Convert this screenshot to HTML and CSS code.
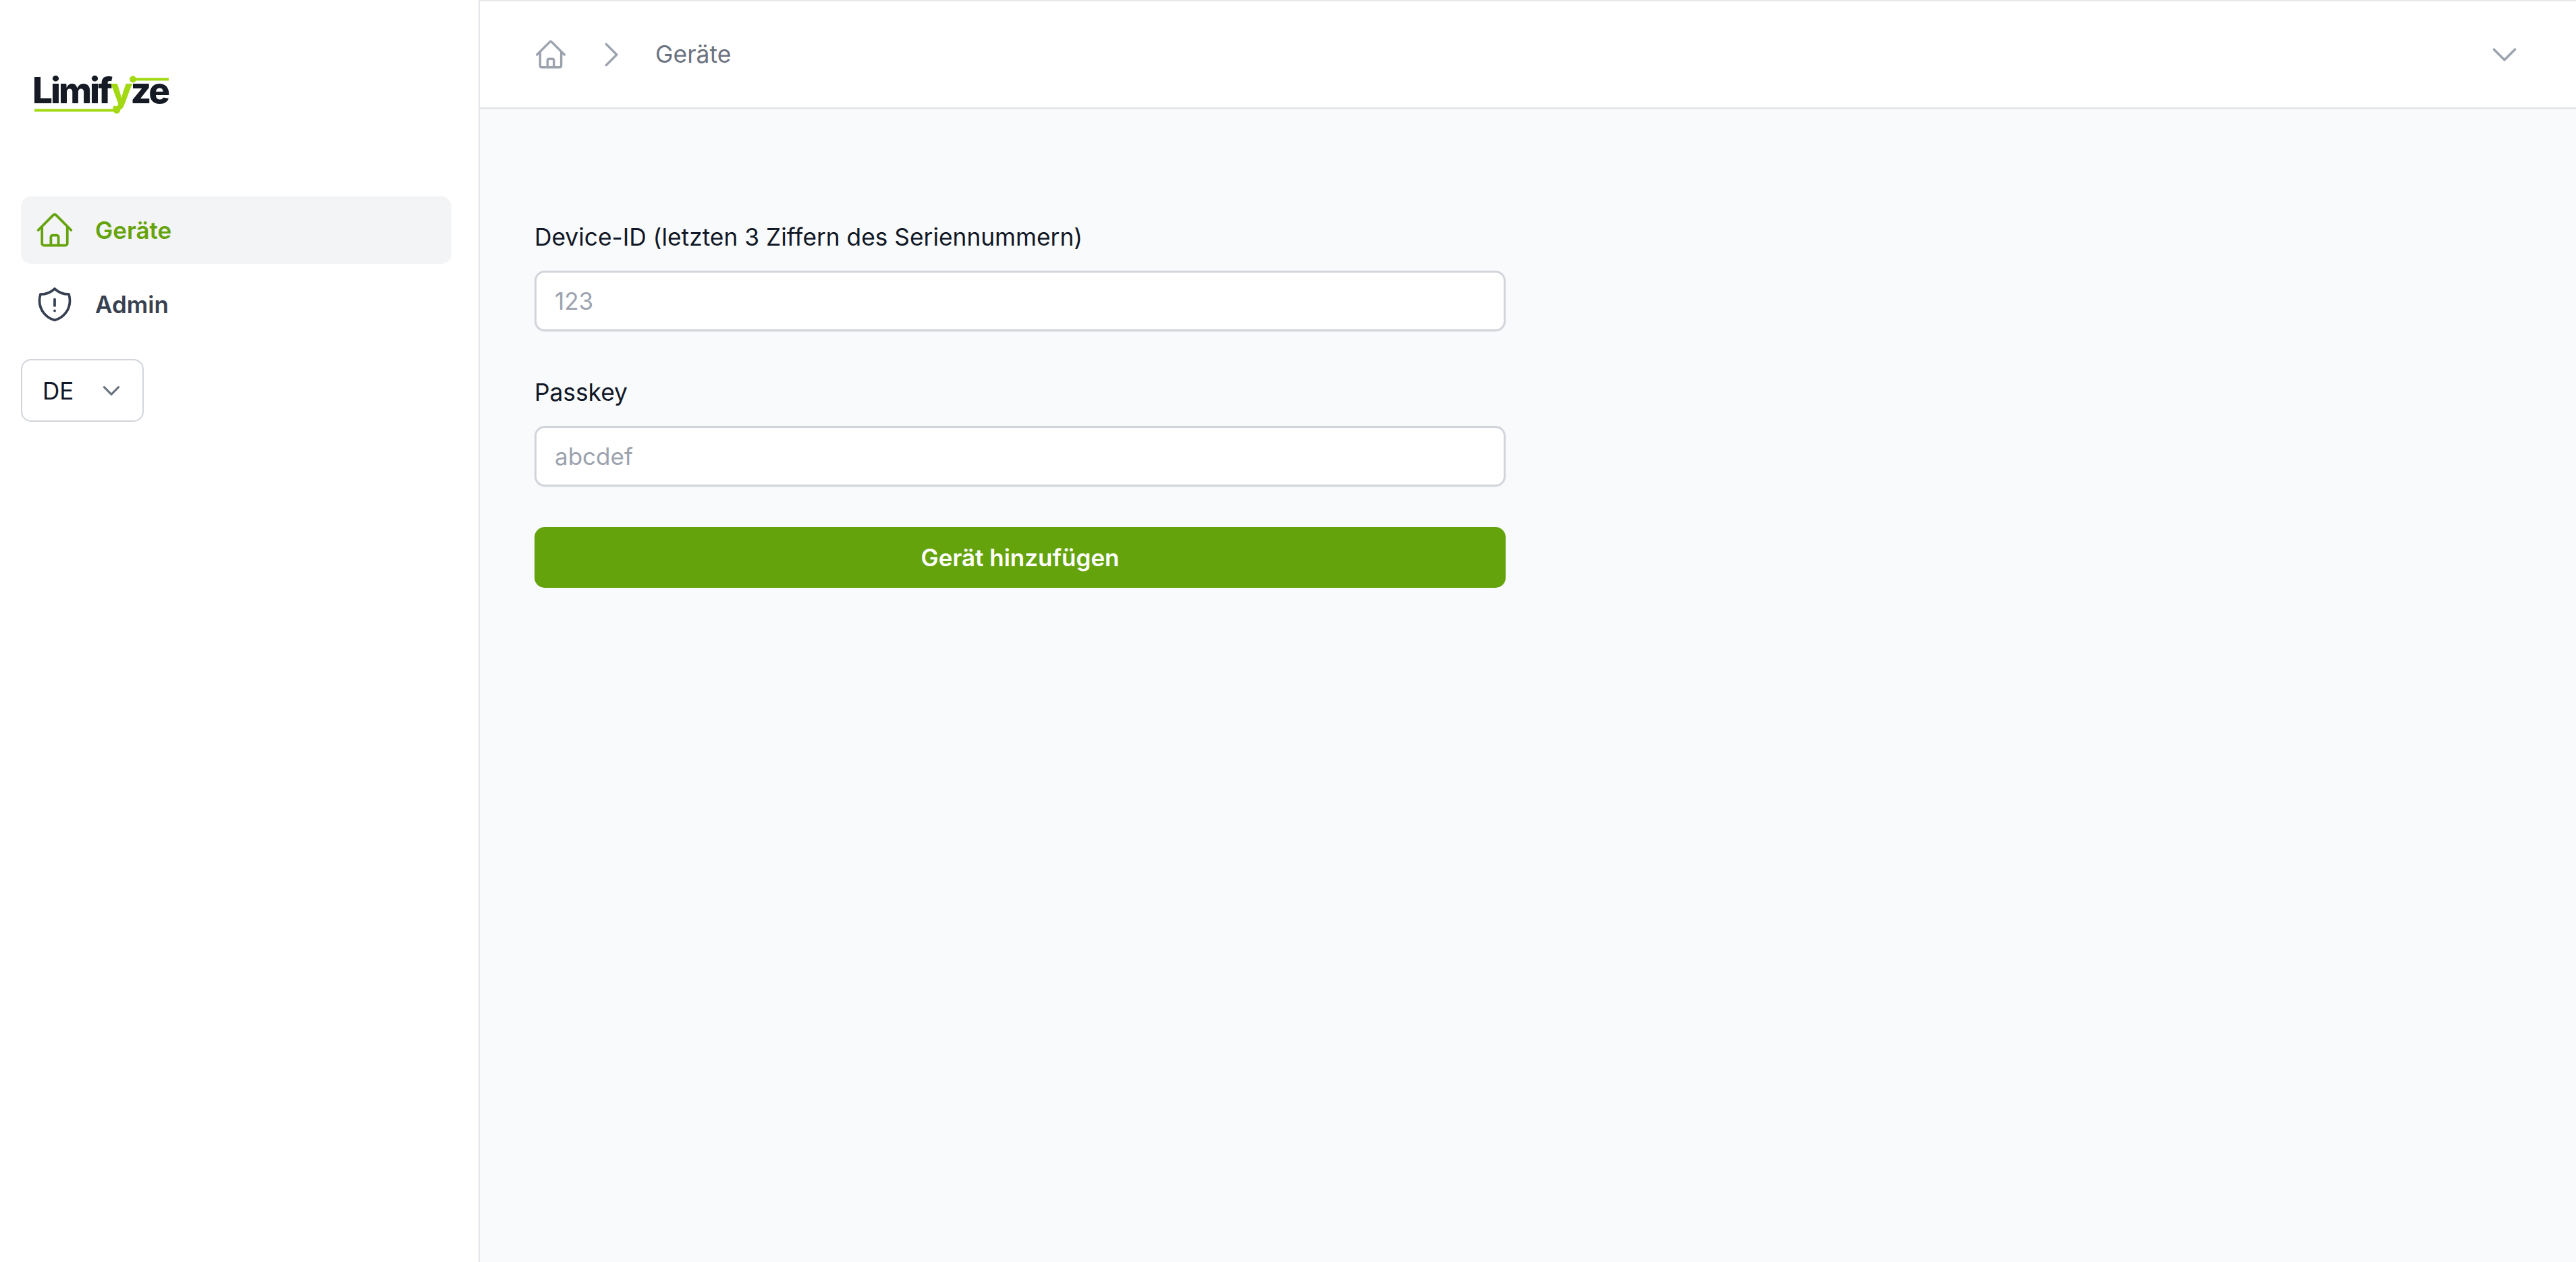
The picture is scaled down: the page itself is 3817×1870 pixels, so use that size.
FILE: index.html
```html
<!DOCTYPE html>
<html lang="de">
<head>
<meta charset="utf-8">
<title>Limifyze</title>
<link rel="stylesheet" href="styles.css">
</head>
<body>
<div class="app">
  <aside class="sidebar">
    <div class="logo">
      <span class="logo-text">Limif<span class="logo-y">y</span>ze</span>
      <svg class="logo-lines" width="210" height="66" viewBox="0 0 210 66" aria-hidden="true">
        <path d="M0 55.500H122" class="logo-line"/>
        <circle cx="122" cy="55.500" r="5" class="logo-dot"/>
        <path d="M146 9.500H199" class="logo-line"/>
        <circle cx="146" cy="9.500" r="5" class="logo-dot"/>
      </svg>
    </div>
    <nav class="nav">
      <a class="nav-item nav-item-active">
        <svg class="nav-icon" viewBox="0 0 24 24"><path d="m2.250 12 8.954-8.955c.44-.439 1.152-.439 1.591 0L21.750 12M4.500 9.750v10.125c0 .621.504 1.125 1.125 1.125H9.750v-4.875c0-.621.504-1.125 1.125-1.125h2.250c.621 0 1.125.504 1.125 1.125V21h4.125c.621 0 1.125-.504 1.125-1.125V9.750M8.250 21h8.250"/></svg>
        <span>Geräte</span>
      </a>
      <a class="nav-item">
        <svg class="nav-icon" viewBox="0 0 24 24"><path d="M12 9v3.750m0-10.036A11.959 11.959 0 0 1 3.598 6 11.990 11.990 0 0 0 3 9.750c0 5.592 3.824 10.290 9 11.622 5.176-1.332 9-6.030 9-11.622 0-1.310-.21-2.571-.598-3.751h-.152c-3.196 0-6.100-1.250-8.250-3.286Zm0 13.036h.008v.008H12v-.008Z"/></svg>
        <span>Admin</span>
      </a>
    </nav>
    <div class="lang">
      <span>DE</span>
      <svg class="lang-chevron" viewBox="0 0 24 24"><path d="m19.500 8.250-7.500 7.500-7.500-7.500"/></svg>
    </div>
  </aside>
  <div class="content">
    <header class="topbar">
      <div class="crumbs">
        <svg class="crumb-icon" viewBox="0 0 24 24"><path d="m2.250 12 8.954-8.955c.44-.439 1.152-.439 1.591 0L21.750 12M4.500 9.750v10.125c0 .621.504 1.125 1.125 1.125H9.750v-4.875c0-.621.504-1.125 1.125-1.125h2.250c.621 0 1.125.504 1.125 1.125V21h4.125c.621 0 1.125-.504 1.125-1.125V9.750M8.250 21h8.250"/></svg>
        <svg class="crumb-icon" viewBox="0 0 24 24"><path d="m8.250 4.500 7.500 7.500-7.500 7.500"/></svg>
        <span class="crumb-text">Geräte</span>
      </div>
      <svg class="crumb-icon" viewBox="0 0 24 24"><path d="m19.500 8.250-7.500 7.500-7.500-7.500"/></svg>
    </header>
    <main class="main">
      <form class="form">
        <div class="field">
          <label class="label" for="device">Device-ID (letzten 3 Ziffern des Seriennummern)</label>
          <input class="input" id="device" type="text" placeholder="123">
        </div>
        <div class="field">
          <label class="label" for="passkey">Passkey</label>
          <input class="input" id="passkey" type="text" placeholder="abcdef">
        </div>
        <button class="submit" type="button">Gerät hinzufügen</button>
      </form>
    </main>
  </div>
</div>
</body>
</html>
```

FILE: styles.css
```css
* { box-sizing: border-box; }
html, body { margin: 0; padding: 0; height: 100%; }
body { font-family: Inter, "Liberation Sans", sans-serif; background: #fff; color: #111827; }
.app { display: flex; height: 1870px; }
.sidebar { width: 711px; flex: none; background: #fff; border-right: 2px solid #e5e7eb; padding: 0 40px 0 31px; display: flex; flex-direction: column; }
.logo { position: relative; margin: 108px 0 0 20px; height: 66px; }
.logo-text { display: block; margin: -5px 0 0 -3px; font-family: Inter, sans-serif; font-weight: 800; font-size: 53px; line-height: 62px; letter-spacing: -3px; color: #151a25; }
.logo-y { color: #a3d912; }
.logo-lines { position: absolute; left: 0; top: 0; }
.logo-line { stroke: #a3d912; stroke-width: 4; fill: none; }
.logo-dot { fill: #a3d912; }
.nav { display: flex; flex-direction: column; gap: 10px; margin-top: 117px; }
.nav-item { display: flex; align-items: center; gap: 30px; height: 100px; padding-left: 20px; border-radius: 15px; font-size: 35px; font-weight: 600; color: #374151; }
.nav-item-active { background: #f3f4f6; color: #65a30d; }
.nav-icon { width: 60px; height: 60px; flex: none; fill: none; stroke: currentColor; stroke-width: 1.500; stroke-linecap: round; stroke-linejoin: round; }
.lang { display: flex; align-items: center; justify-content: space-between; width: 182px; height: 93px; margin-top: 31px; padding: 0 29px 0 30px; background: #fff; border: 2px solid #d1d5db; border-radius: 15px; font-size: 35px; color: #111827; }
.lang-chevron { width: 34px; height: 34px; fill: none; stroke: #6b7280; stroke-width: 2.200; stroke-linecap: round; stroke-linejoin: round; }
.content { flex: 1; display: flex; flex-direction: column; min-width: 0; }
.topbar { flex: none; height: 162px; display: flex; align-items: center; justify-content: space-between; background: #fff; border-top: 2px solid #e5e7eb; border-bottom: 3px solid #e5e7eb; padding: 0 81px 0 80px; }
.crumbs { display: flex; align-items: center; gap: 40px; }
.crumb-icon { width: 50px; height: 50px; flex: none; fill: none; stroke: #9ca3af; stroke-width: 1.650; stroke-linecap: round; stroke-linejoin: round; }
.crumb-text { font-size: 35.500px; font-weight: 400; color: #6b7280; }
.main { flex: 1; background: #f9fafb; padding: 165px 0 0 81px; }
.form { width: 1439px; display: flex; flex-direction: column; gap: 60px; }
.field { display: flex; flex-direction: column; gap: 24px; }
.field + .field { margin-top: 6px; }
.label { font-size: 35.300px; line-height: 50px; font-weight: 400; color: #111827; }
.input { width: 100%; height: 90px; padding: 0 27px; background: #fff; border: 3px solid #d1d5db; border-radius: 15px; box-shadow: 0 1px 2px rgba(0, 0, 0, .05); font-family: Inter, sans-serif; font-size: 35px; color: #111827; outline: none; }
.input::placeholder { color: #9ca3af; opacity: 1; }
.submit { height: 90px; border: 0; border-radius: 15px; background: #65a30d; color: #fff; font-family: Inter, sans-serif; font-size: 35px; font-weight: 600; }
```
